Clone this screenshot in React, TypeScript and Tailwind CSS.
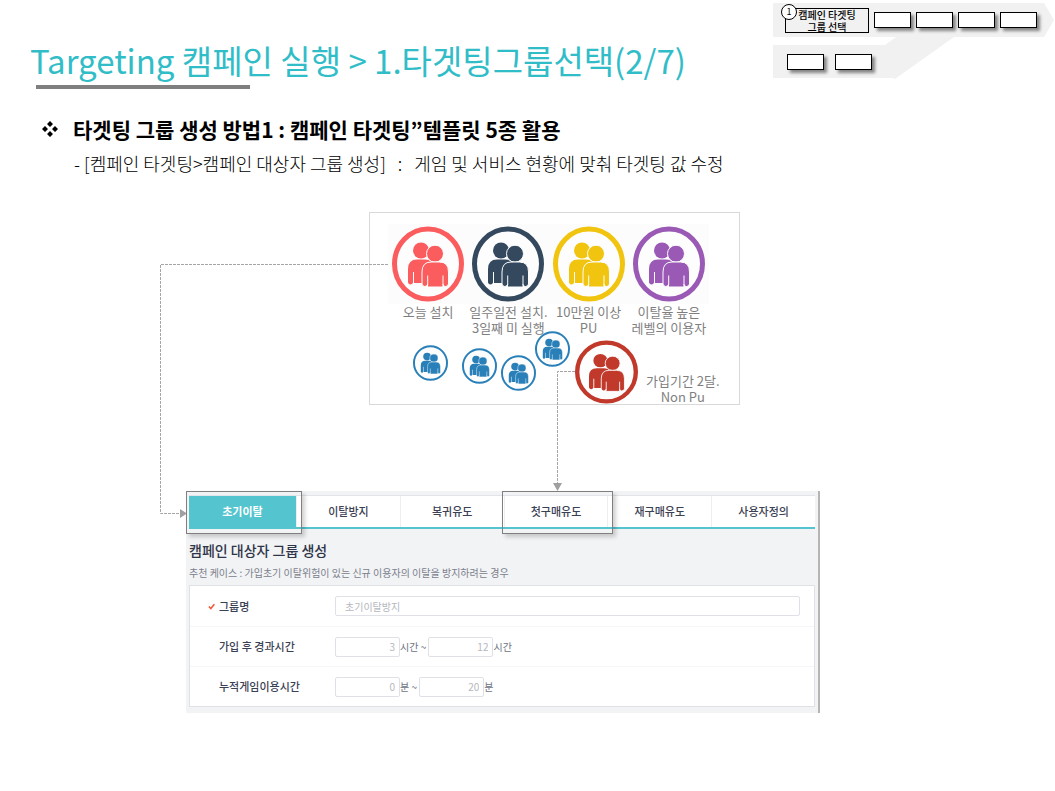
import React from "react";

const KR = "font-['Noto_Sans_CJK_KR',sans-serif]";

function People({ color, className, ring = 5 }: { color: string; className: string; ring?: number }) {
  return (
    <svg viewBox="0 0 72 76" preserveAspectRatio="none" className={className} aria-hidden="true">
      <ellipse cx="36" cy="38" rx={36 - ring / 2} ry={37.5 - ring / 2} fill="#fdfdfd" stroke={color} strokeWidth={ring} />
      <g fill={color}>
        <circle cx="29" cy="24.5" r="8" />
        <path d="M16 43q0-9.500 9-9.500h8q5 0 7 3v20.500H22V46h-1v10.500q-.5 2-2.500 2T16 56.500z" />
      </g>
      <g fill={color} stroke="#fdfdfd" strokeWidth="1">
        <circle cx="43" cy="27.700" r="8.500" />
        <path d="M30 46q0-10 9-10h8.500q9 0 9 10v12q-.5 2.500-3 2.500T51 58.500v2.500H35.500v-2.500q-.5 2-2.700 2T30 58z" />
      </g>
      <path d="M35.700 49.500V59M51 49.500V59" stroke="#fdfdfd" strokeWidth="1" />
    </svg>
  );
}

const segments = [
  { color: "#fb5d5f", lines: ["오늘 설치"] },
  { color: "#34495e", lines: ["일주일전 설치.", "3일째 미 실행"] },
  { color: "#f1c40f", lines: ["10만원 이상", "PU"] },
  { color: "#9b59b6", lines: ["이탈율 높은", "레벨의 이용자"] },
];

const tabs = ["초기이탈", "이탈방지", "복귀유도", "첫구매유도", "재구매유도", "사용자정의"];

function StepBox() {
  return <li className="h-4 w-[37px] border border-black bg-white shadow-[3px_3px_3px_rgba(0,0,0,0.45)]" />;
}

function Steps() {
  return (
    <nav aria-label="진행 단계" className="relative mt-[3px] h-[76px] w-[282px] shrink-0">
      <svg viewBox="0 0 282 76" className="absolute inset-0 h-full w-full" aria-hidden="true">
        <path d="M0 0h271l10 17-10 17h-90l-59 42-2-1H0V42h112l11-8H0z" fill="#f1f1f1" />
      </svg>
      <ol className="relative flex h-[34px] items-center gap-[5px] pl-3">
        <li className="relative h-[25px] w-[84px] border border-black text-center text-[10px] leading-3 font-medium text-black">
          <span className="absolute -top-[5px] -left-[5px] flex h-4 w-4 items-center justify-center rounded-full border border-black bg-white text-[9px] font-normal">
            1
          </span>
          캠페인 타겟팅
          <br />
          그룹 선택
        </li>
        <StepBox />
        <StepBox />
        <StepBox />
        <StepBox />
      </ol>
      <ol className="relative mt-2 flex h-[34px] items-center gap-[11px] pl-[14px]">
        <StepBox />
        <StepBox />
      </ol>
    </nav>
  );
}

function SegmentCard() {
  return (
    <div className="relative ml-[210px] h-[193px] w-[371px] border border-[#d9d9d9] bg-white pt-[11px] pl-[18px]">
      <ul className="flex w-[321px]">
        {segments.map((s) => (
          <li key={s.color} className="flex min-w-0 flex-1 flex-col items-center">
            <div className="flex w-full justify-center bg-[#fcfcfc] py-[2px]">
              <People color={s.color} className="h-[76px] w-[72px]" />
            </div>
            <p className="text-center text-[13px] leading-4 whitespace-nowrap text-[#7f7f7f]">
              {s.lines.map((l) => (
                <span key={l} className="block">
                  {l}
                </span>
              ))}
            </p>
          </li>
        ))}
      </ul>
      <People color="#2980b9" ring={4} className="absolute top-[132px] left-[43px] h-9 w-[35px]" />
      <People color="#2980b9" ring={4} className="absolute top-[135px] left-[92px] h-9 w-[35px]" />
      <People color="#2980b9" ring={4} className="absolute top-[142px] left-[131px] h-9 w-[35px]" />
      <People color="#2980b9" ring={4} className="absolute top-[118px] left-[165px] h-9 w-[35px]" />
      <People color="#c0392b" className="absolute top-[127px] left-[205px] h-[64px] w-[63px]" />
      <p className="absolute top-[160px] left-[276px] text-center text-[13px] leading-4 whitespace-nowrap text-[#7f7f7f]">
        가입기간 2달.
        <br />
        Non Pu
      </p>
    </div>
  );
}

const box = "h-5 rounded-[2px] border border-[#dfe1e6] bg-white text-[10px] text-[#b4b7be]";
const unit = "text-[10px] text-[#6d7382]";

function RangeRow({ id, label, from, to, suffix }: { id: string; label: string; from: string; to: string; suffix: string }) {
  return (
    <div className="flex h-10 items-center border-t border-[#f5f6f8]">
      <label htmlFor={id} className="w-[145px] pl-[29px] text-[11px] font-medium text-[#3b4154]">
        {label}
      </label>
      <input id={id} defaultValue={from} className={`${box} w-[65px] px-1 text-right`} />
      <span className={`${unit} whitespace-pre`}>{suffix} ~ </span>
      <input aria-label={`${label} 최대`} defaultValue={to} className={`${box} w-[65px] px-1 text-right`} />
      <span className={unit}>{suffix}</span>
    </div>
  );
}

function CampaignPanel() {
  return (
    <div className="mt-[86px] ml-[27px] border-r-2 border-[#b5b5b5] bg-[#f2f3f5] pt-1 pr-[3px] pb-[6px] pl-[3px]">
      <div role="tablist" className="flex h-[34px] border-t border-b-2 border-t-[#e2e4e9] border-b-[#54c4ce] bg-white">
        {tabs.map((t, i) => (
          <button
            key={t}
            role="tab"
            aria-selected={i === 0}
            className={
              i === 0
                ? "relative w-[107px] bg-[#54c4ce] text-[11px] font-bold text-white"
                : "relative flex-1 border-l border-[#eceef1] text-[11px] font-medium text-[#3b4154]"
            }
          >
            {t}
            {(i === 0 || i === 3) && (
              <span className="absolute -top-[5px] -right-[6px] -bottom-[7px] -left-[3px] z-10 border border-[#7f7f7f] shadow-[3px_3px_4px_rgba(0,0,0,0.18)]" />
            )}
          </button>
        ))}
      </div>
      <h2 className="mt-[11px] text-[14px] leading-5 font-medium text-[#2f3548]">캠페인 대상자 그룹 생성</h2>
      <p className="mt-[5px] text-[10px] leading-4 text-[#7b808c]">
        추천 케이스 : 가입초기 이탈위험이 있는 신규 이용자의 이탈을 방지하려는 경우
      </p>
      <form className="mt-1 border border-[#dfe1e6] bg-white">
        <div className="flex h-10 items-center pr-[14px]">
          <label htmlFor="name" className="flex w-[145px] items-center gap-1 pl-[18px] text-[11px] font-medium text-[#3b4154]">
            <svg viewBox="0 0 8 8" className="h-[7px] w-[7px]" aria-hidden="true">
              <path d="M1 4l2.200 2.300L7.300 1.500" fill="none" stroke="#ee5a36" strokeWidth="1.800" />
            </svg>
            그룹명
          </label>
          <input id="name" defaultValue="초기이탈방지" className={`${box} min-w-0 flex-1 px-[9px]`} />
        </div>
        <RangeRow id="elapsed" label="가입 후 경과시간" from="3" to="12" suffix="시간" />
        <RangeRow id="played" label="누적게임이용시간" from="0" to="20" suffix="분" />
      </form>
    </div>
  );
}

export default function App() {
  return (
    <main className={`min-h-screen bg-white text-black ${KR}`}>
      <header className="flex items-start justify-between">
        <div className="pt-9 pl-[30px]">
          <h1 className="text-[33px] leading-[49px] whitespace-nowrap text-[#31bdc8]">
            Targeting 캠페인 실행 &gt; 1.타겟팅그룹선택(2/7)
          </h1>
          <div className="ml-[6px] h-1 w-[214px] bg-[#7f7f7f]" />
        </div>
        <Steps />
      </header>

      <section className="pt-[26px] pl-[42px]">
        <h2 className="flex items-center gap-[15px] text-[21px] leading-7 font-bold">
          <svg viewBox="0 0 16 16" className="h-4 w-4" aria-hidden="true">
            <path d="M8 0l3 3-3 3-3-3zM8 10l3 3-3 3-3-3zM3 5l3 3-3 3-3-3zM13 5l3 3-3 3-3-3z" />
          </svg>
          타겟팅 그룹 생성 방법1 : 캠페인 타겟팅”템플릿 5종 활용
        </h2>
        <p className="mt-[6px] pl-8 text-[18px] leading-7 font-light whitespace-pre">
          - [켐페인 타겟팅&gt;캠페인 대상자 그룹 생성]   :   게임 및 서비스 현황에 맞춰 타겟팅 값 수정
        </p>
      </section>

      <section className="relative mt-[35px] ml-[159px] w-[661px]">
        <SegmentCard />
        <CampaignPanel />
        <svg viewBox="0 0 661 501" className="pointer-events-none absolute top-0 left-0 h-[501px] w-[661px]" aria-hidden="true">
          <g fill="none" stroke="#a6a6a6" strokeDasharray="3 1">
            <path d="M229 52.500H1.500V301.500H21" />
            <path d="M416 159.500H398.500V272" />
          </g>
          <path d="M21 297l7 4.500-7 4.500zM394 271h9l-4.500 8z" fill="#a0a0a0" />
        </svg>
      </section>
    </main>
  );
}
